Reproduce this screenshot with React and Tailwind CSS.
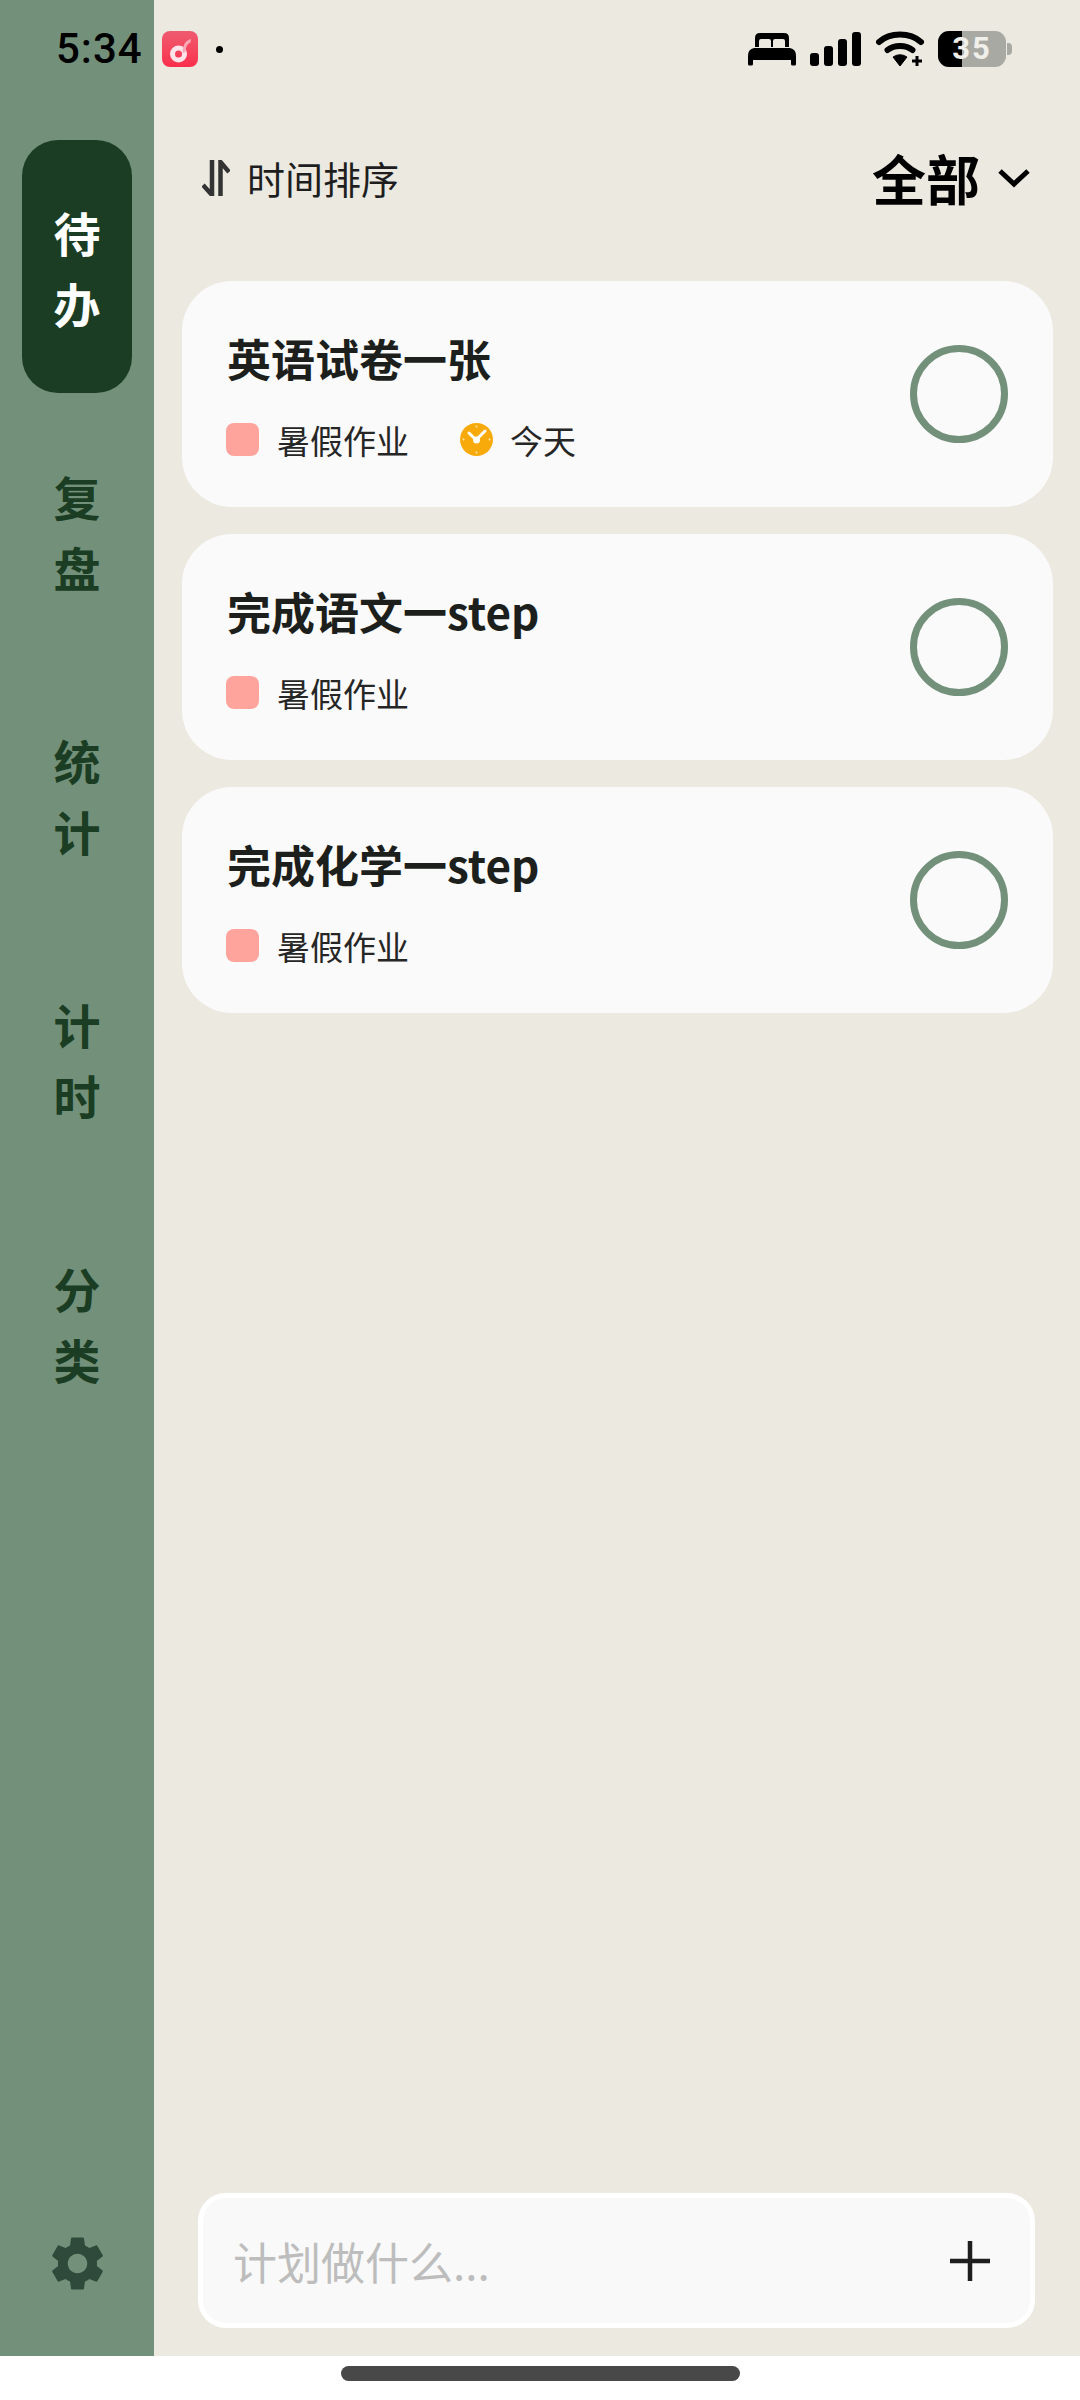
import { MdSettings } from "react-icons/md";

const FONT = "font-['Noto_Sans_CJK_SC','Noto_Sans',sans-serif]";

const navItems = [
  { id: "todo", chars: ["待", "办"], active: true },
  { id: "review", chars: ["复", "盘"] },
  { id: "stats", chars: ["统", "计"] },
  { id: "timer", chars: ["计", "时"] },
  { id: "category", chars: ["分", "类"] },
];

const tasks = [
  { id: 1, title: "英语试卷一张", today: true },
  { id: 2, title: "完成语文一step" },
  { id: 3, title: "完成化学一step" },
];

function StatusBar() {
  return (
    <div className="absolute top-0 left-0 w-full h-[96px] pointer-events-none">
      <span className="absolute left-[56px] top-[25px] text-[42px] leading-[48px] font-medium text-black font-['Roboto',sans-serif] tracking-[1px]">
        5:34
      </span>
      <div className="absolute left-[162px] top-[31px] w-[36px] h-[36px] rounded-[8px] bg-linear-to-b from-[#ee5a70] to-[#fa2d4b] flex items-center justify-center">
        <svg width="36" height="36" viewBox="0 0 36 36">
          <circle cx="16.500" cy="23" r="6" fill="none" stroke="#fde4e8" strokeWidth="5" />
          <path d="M20.500 22 C21 14 23 9.500 29 8 L28.500 11.500 C25.500 12.500 24 15.500 23.500 21 Z" fill="#f9a9b6" />
        </svg>
      </div>
      <div className="absolute left-[216px] top-[46px] w-[7px] h-[7px] rounded-full bg-black" />

      {/* bed */}
      <svg className="absolute left-[748px] top-[32px]" width="48" height="34" viewBox="0 0 48 34">
        <path
          d="M7 15 V6 Q7 1 12 1 H36 Q41 1 41 6 V15 H37 V9 Q37 7 35 7 H27 Q25 7 25 9 V15 H23 V9 Q23 7 21 7 H13 Q11 7 11 9 V15 Z"
          fill="#000"
        />
        <path d="M6 16 H42 Q48 17 48 24 V32 Q48 33.500 46.500 33.500 H44.500 Q43 33.500 43 32 V28 H5 V32 Q5 33.500 3.500 33.500 H1.500 Q0 33.500 0 32 V24 Q0 17 6 16 Z" fill="#000" />
      </svg>

      {/* signal */}
      <div className="absolute left-[810px] top-[32px] h-[34px] flex items-end gap-[5px]">
        <div className="w-[9px] h-[13px] rounded-[3px] bg-black" />
        <div className="w-[9px] h-[20px] rounded-[3px] bg-black" />
        <div className="w-[9px] h-[27px] rounded-[3px] bg-black" />
        <div className="w-[9px] h-[34px] rounded-[3px] bg-black" />
      </div>

      {/* wifi */}
      <svg className="absolute left-[876px] top-[31px]" width="49" height="37" viewBox="0 0 49 37">
        <path d="M3 11 C14 1 34 1 45 11" fill="none" stroke="#000" strokeWidth="6" strokeLinecap="round" />
        <path d="M11.500 19 C18 13.500 30 13.500 36.500 19" fill="none" stroke="#000" strokeWidth="6" strokeLinecap="round" />
        <path d="M17 26 Q24 21.500 31 26 L24 35 Z" fill="#000" stroke="#000" strokeLinejoin="round" />
        <path d="M41 25 V35 M36 30 H46" stroke="#000" strokeWidth="3" />
      </svg>

      {/* battery */}
      <div className="absolute left-[938px] top-[31px] w-[68px] h-[36px] rounded-[11px] bg-[#a9a9a4] overflow-hidden flex items-center justify-center">
        <div className="absolute left-0 top-0 h-full w-[24px] bg-black" />
        <span className="relative text-[31px] leading-[36px] font-bold text-[#f0efea] font-['Roboto',sans-serif] tracking-[2px]">
          35
        </span>
      </div>
      <div className="absolute left-[1007px] top-[43px] w-[5px] h-[12px] rounded-r-[4px] bg-[#a9a9a4]" />
    </div>
  );
}

function Sidebar() {
  return (
    <aside className="w-[154px] shrink-0 bg-[#73917a] flex flex-col items-center pt-[140px] pb-[60px]">
      <nav className="flex flex-col gap-[11px]">
        {navItems.map((item) => (
          <div
            key={item.id}
            className={
              item.active
                ? "w-[110px] h-[253px] rounded-[36px] bg-[#1b3d23] flex flex-col items-center justify-center text-white"
                : "w-[110px] h-[253px] rounded-[36px] flex flex-col items-center justify-center text-[#1b3d23]"
            }
          >
            {item.chars.map((c) => (
              <span key={c} className="text-[47px] leading-[71px] font-bold">
                {c}
              </span>
            ))}
          </div>
        ))}
      </nav>
      <MdSettings className="mt-auto text-[#2f4a3a]" size={65} />
    </aside>
  );
}

function ClockIcon() {
  return (
    <svg width="33" height="33" viewBox="0 0 33 33">
      <circle cx="16.500" cy="16.500" r="16.500" fill="#f8aa0b" />
      <circle cx="16.500" cy="3.500" r="1" fill="#fde7b0" />
      <circle cx="16.500" cy="29.500" r="1" fill="#fde7b0" />
      <circle cx="3.500" cy="16.500" r="1" fill="#fde7b0" />
      <circle cx="29.500" cy="16.500" r="1" fill="#fde7b0" />
      <path d="M9 10 L16 17 L25 8" fill="none" stroke="#fff" strokeWidth="3" strokeLinecap="round" />
      <circle cx="16.500" cy="17" r="3.500" fill="#fff" />
    </svg>
  );
}

function TaskCard({ task }) {
  return (
    <div className="relative h-[226px] rounded-[50px] bg-[#fafafa] pl-[44px] pr-[45px] flex items-center justify-between">
      <div className="flex flex-col">
        <div className="text-[44px] leading-[60px] font-bold text-[#1c1f1c] mt-[-1px] ml-[1px]">
          {task.title}
        </div>
        <div className="flex items-center mt-[32px] h-[40px] text-[33px] leading-[40px] text-[#262626]">
          <div className="w-[33px] h-[33px] rounded-[8px] bg-[#fea49c]" />
          <span className="ml-[18px]">暑假作业</span>
          {task.today && (
            <>
              <div className="ml-[51px]">
                <ClockIcon />
              </div>
              <span className="ml-[17px]">今天</span>
            </>
          )}
        </div>
      </div>
      <div className="w-[98px] h-[98px] rounded-full border-[7px] border-[#73917a] shrink-0" />
    </div>
  );
}

export default function App() {
  return (
    <div className={`relative w-[1080px] h-[2400px] overflow-hidden bg-white flex flex-col ${FONT}`}>
      <div className="h-[2356px] flex">
        <Sidebar />
        <main className="flex-1 bg-[#ece9e0] flex flex-col pt-[138px] pb-[28px]">
          <div className="flex items-center justify-between h-[80px] pl-[48px] pr-[50px]">
            <div className="flex items-center">
              <svg width="28" height="36" viewBox="0 0 28 36">
                <path d="M10 0 V35 L1 25" fill="none" stroke="#333" strokeWidth="4.500" />
                <path d="M18.500 36 V2 L27 12" fill="none" stroke="#333" strokeWidth="4.500" />
              </svg>
              <span className="ml-[17px] text-[38px] leading-[50px] text-[#1e1e1e]">时间排序</span>
            </div>
            <div className="flex items-center">
              <span className="text-[54px] leading-[70px] font-bold text-black">全部</span>
              <svg className="ml-[18px]" width="32" height="20" viewBox="0 0 32 20">
                <path d="M2 3 L16 16 L30 3" fill="none" stroke="#000" strokeWidth="5" />
              </svg>
            </div>
          </div>

          <div className="mt-[63px] ml-[28px] mr-[27px] flex flex-col gap-[27px]">
            {tasks.map((t) => (
              <TaskCard key={t.id} task={t} />
            ))}
          </div>

          <div className="mt-auto ml-[44px] mr-[45px] h-[135px] rounded-[28px] border-[5px] border-white bg-[#f9f9f9] flex items-center justify-between pl-[30px] pr-[40px]">
            <span className="text-[44px] leading-[56px] text-[#bdbdbd]">计划做什么...</span>
            <svg width="40" height="40" viewBox="0 0 40 40">
              <path d="M20 0 V40 M0 20 H40" stroke="#1e1e1e" strokeWidth="4.500" />
            </svg>
          </div>
        </main>
      </div>
      <div className="flex-1 flex items-start justify-center pt-[10px] bg-white">
        <div className="w-[399px] h-[15px] rounded-full bg-[#484848]" />
      </div>
      <StatusBar />
    </div>
  );
}
